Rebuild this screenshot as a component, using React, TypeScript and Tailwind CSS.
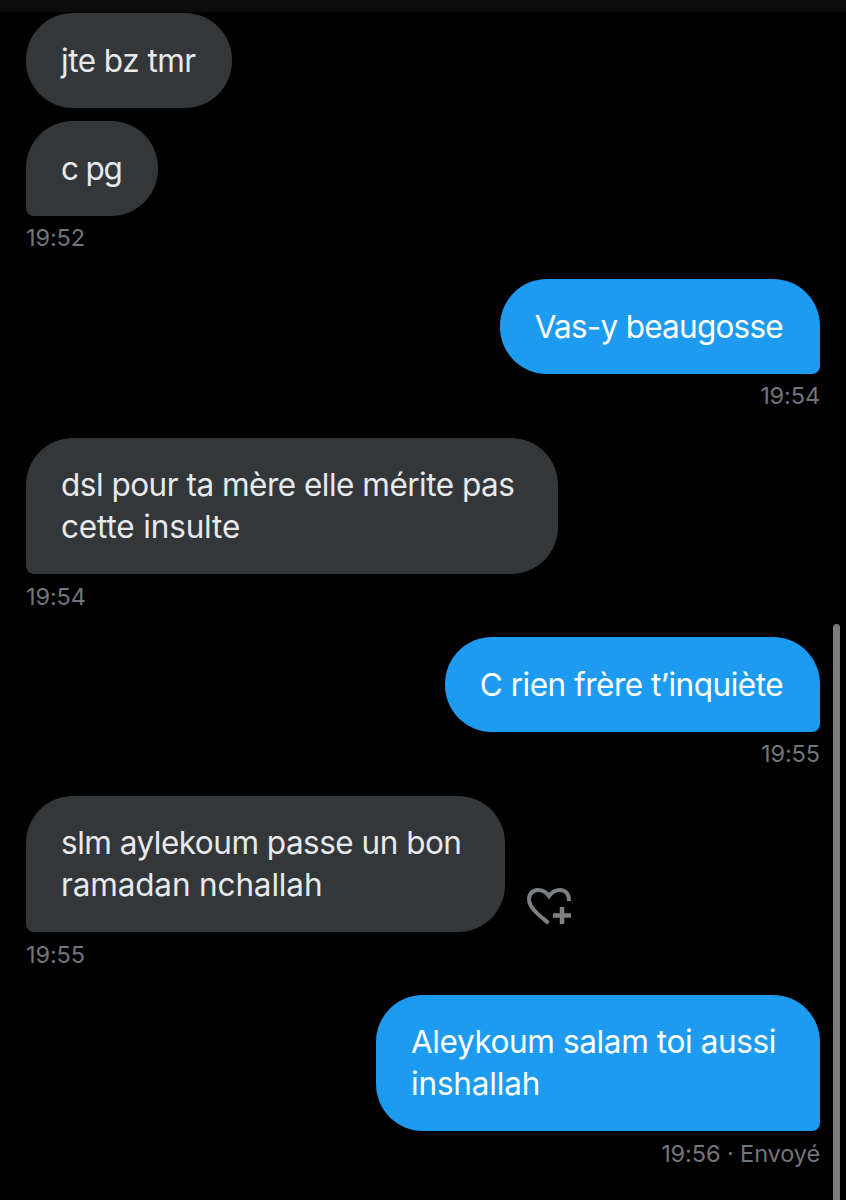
type Msg = {
  lines: string[];
  mine?: boolean;
  tail?: boolean;
  time?: string;
  react?: boolean;
  mt: string;
  track?: string;
};

const messages: Msg[] = [
  { lines: ["jte bz tmr"], mt: "mt-[1px]" },
  { lines: ["c pg"], tail: true, time: "19:52", mt: "mt-[13px]", track: "tracking-[-1.2px]" },
  { lines: ["Vas-y beaugosse"], mine: true, tail: true, time: "19:54", mt: "mt-[25px]", track: "tracking-[-0.75px]" },
  { lines: ["dsl pour ta mère elle mérite pas", "cette insulte"], tail: true, time: "19:54", mt: "mt-[26px]" },
  { lines: ["C rien frère t’inquiète"], mine: true, tail: true, time: "19:55", mt: "mt-[24px]" },
  { lines: ["slm aylekoum passe un bon", "ramadan nchallah"], tail: true, time: "19:55", react: true, mt: "mt-[26px]" },
  { lines: ["Aleykoum salam toi aussi", "inshallah"], mine: true, tail: true, time: "19:56 · Envoyé", mt: "mt-[24px]", track: "tracking-[-0.38px]" },
];

function HeartPlus() {
  return (
    <svg width="44" height="37" viewBox="0 0 44 37" fill="none" stroke="#7c8185" strokeWidth="4" className="mb-[7px] ml-[22px] shrink-0">
      <path d="M21.500 35 C12 27 2 20 2 11 C2 5.500 6 2 11 2 C15.500 2 19.500 4.500 22 8 C24.500 4.500 28 2 33 2 C38.500 2 42 6 42 13" />
      <path d="M35 19 V36 M26 27.500 H44" strokeWidth="4.500" />
    </svg>
  );
}

function Bubble({ m }: { m: Msg }) {
  const corner = m.tail ? (m.mine ? "rounded-br-[8px]" : "rounded-bl-[8px]") : "";
  const wrapped = m.lines.length > 1;
  const right = wrapped ? "pr-[44px]" : m.mine ? "pr-[37px]" : "pr-[36px]";
  return (
    <div className={`${m.mt} flex flex-col ${m.mine ? "items-end" : "items-start"}`}>
      <div className="flex items-end">
        <div
          className={`rounded-[47px] pl-[35px] text-[31.500px] leading-[42px] whitespace-nowrap ${right} ${
            wrapped ? "py-[26px]" : "py-[26.500px]"
          } ${m.track ?? "tracking-[-0.5px]"} ${
            m.mine ? "bg-[#1d9bf0] text-white" : "bg-[#33373a] text-[#e7e9ea]"
          } ${corner}`}
        >
          {m.lines.map((l, i) => (
            <div key={l} className={i === 1 ? "tracking-[-0.15px]" : ""}>
              {l}
            </div>
          ))}
        </div>
        {m.react && <HeartPlus />}
      </div>
      {m.time && (
        <div className={`${wrapped ? "mt-[7px]" : "mt-[6px]"} text-[23.500px] leading-[32px] tracking-[-0.1px] text-[#71767b]`}>
          {m.time}
        </div>
      )}
    </div>
  );
}

export default function App() {
  return (
    <div className="relative h-[1200px] w-[846px] overflow-hidden bg-black font-['Inter',sans-serif]">
      <div className="h-[12px] bg-[#0c0c0d]" />
      <div className="flex flex-col pl-[26px] pr-[26px]">
        {messages.map((m, i) => (
          <Bubble key={i} m={m} />
        ))}
      </div>
      {/* scrollbar */}
      <div className="absolute left-[833px] top-[624px] h-[600px] w-[7px] rounded-full bg-[#7c7c7c]" />
    </div>
  );
}
